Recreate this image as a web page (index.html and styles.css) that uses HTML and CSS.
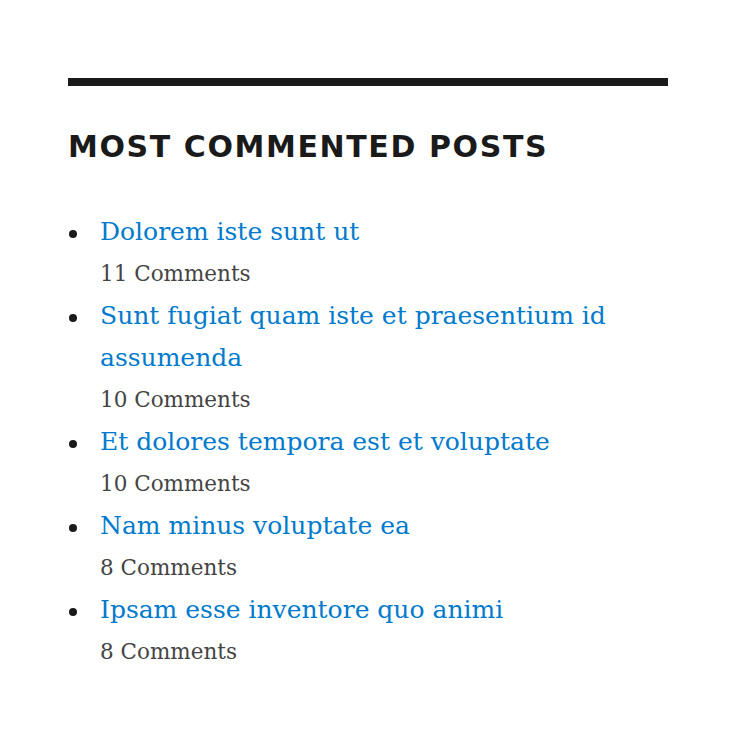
FILE: index.html
```html
<!DOCTYPE html>
<html>
<head>
<meta charset="utf-8">
<link rel="stylesheet" href="styles.css">
</head>
<body>
<section class="widget">
  <div class="rule"></div>
  <h2 class="widget-title">Most Commented Posts</h2>
  <ul class="post-list">
    <li><a href="#">Dolorem iste sunt ut</a><div class="count">11 Comments</div></li>
    <li><a href="#">Sunt fugiat quam iste et praesentium id assumenda</a><div class="count">10 Comments</div></li>
    <li><a href="#">Et dolores tempora est et voluptate</a><div class="count">10 Comments</div></li>
    <li><a href="#">Nam minus voluptate ea</a><div class="count">8 Comments</div></li>
    <li><a href="#">Ipsam esse inventore quo animi</a><div class="count">8 Comments</div></li>
  </ul>
</section>
</body>
</html>
```

FILE: styles.css
```css
html, body {
  margin: 0;
  padding: 0;
  background: #fff;
}
.widget {
  width: 600px;
  margin-left: 68px;
  padding-top: 78px;
}
.rule {
  height: 8px;
  background: #1a1a1a;
}
.widget-title {
  margin: 43px 0 0;
  font-family: "DejaVu Sans", sans-serif;
  font-weight: bold;
  font-size: 30px;
  line-height: 36px;
  letter-spacing: 1.6px;
  text-transform: uppercase;
  color: #1a1a1a;
}
.post-list {
  margin: 46px 0 0;
  padding: 0;
  list-style: none;
  font-family: "DejaVu Serif", serif;
  font-size: 25px;
  line-height: 42px;
  color: #1a1a1a;
}
.post-list li {
  display: grid;
  grid-template-columns: 32px 1fr;
}
.post-list li::before {
  content: "";
  grid-row: 1;
  grid-column: 1;
  width: 8px;
  height: 8px;
  margin: 19px 0 0 1px;
  border-radius: 50%;
  background: #1a1a1a;
}
.post-list a {
  grid-column: 2;
  color: #007acc;
  text-decoration: none;
}
.count {
  grid-column: 2;
  font-size: 21.5px;
  color: #444;
}
```
